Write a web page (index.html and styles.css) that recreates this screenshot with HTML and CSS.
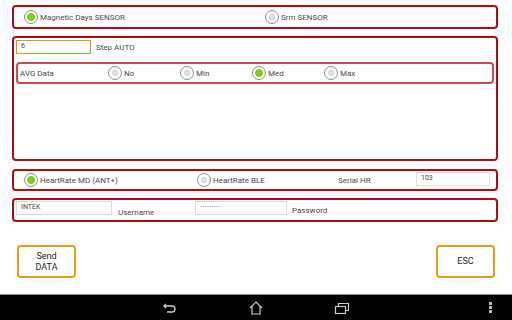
FILE: index.html
```html
<!DOCTYPE html>
<html>
<head>
    <title>Settings</title>
    <link rel="stylesheet" href="styles.css">
</head>
<body>
    <div class="screen">
        <div class="content">
            <div class="panel row sensors">
                <label class="radio-item w-sensor"><span class="radio checked"></span>Magnetic Days SENSOR</label>
                <label class="radio-item"><span class="radio"></span>Srm SENSOR</label>
            </div>

            <div class="panel big">
                <div class="step-row">
                    <div class="field orange">6</div>
                    <span class="lbl">Step AUTO</span>
                </div>
                <div class="avg-box">
                    <span class="lbl avg-title">AVG Data</span>
                    <label class="radio-item w-avg"><span class="radio"></span>No</label>
                    <label class="radio-item w-avg"><span class="radio"></span>Min</label>
                    <label class="radio-item w-avg"><span class="radio checked"></span>Med</label>
                    <label class="radio-item"><span class="radio"></span>Max</label>
                </div>
            </div>

            <div class="panel row hr">
                <label class="radio-item w-hr"><span class="radio checked"></span>HeartRate MD (ANT+)</label>
                <label class="radio-item w-ble"><span class="radio"></span>HeartRate BLE</label>
                <span class="lbl w-serial">Serial HR</span>
                <div class="field grey serial">103</div>
            </div>

            <div class="panel row login">
                <div class="field grey user">INTEK</div>
                <span class="lbl w-user">Username</span>
                <div class="field grey pass">&middot;&middot;&middot;&middot;&middot;&middot;&middot;&middot;&middot;</div>
                <span class="lbl">Password</span>
            </div>

            <div class="buttons">
                <button class="btn">Send<br>DATA</button>
                <button class="btn">ESC</button>
            </div>
        </div>

        <div class="navbar">
            <svg class="nav-icon back" width="16" height="12" viewBox="0 0 16 12">
                <path d="M4 2 L2 4 L4 6 M2 4 H10 Q13 4 13 7 Q13 10 10 10 H5" fill="none" stroke="#ccc" stroke-width="1.3"/>
            </svg>
            <svg class="nav-icon" width="16" height="16" viewBox="0 0 16 16">
                <path d="M2 8 L8 2 L14 8 M4 6.5 V14 H12 V6.5" fill="none" stroke="#ccc" stroke-width="1.2"/>
            </svg>
            <svg class="nav-icon" width="16" height="14" viewBox="0 0 16 14">
                <rect x="1.5" y="5.5" width="10" height="7" fill="none" stroke="#ccc" stroke-width="1.2"/>
                <path d="M4.5 5.5 V2.5 H14.5 V9.5 H11.5" fill="none" stroke="#ccc" stroke-width="1.2"/>
            </svg>
            <div class="menu-dots"><i></i><i></i><i></i></div>
        </div>
    </div>
</body>
</html>
```

FILE: styles.css
```css
* {
    margin: 0;
    padding: 0;
    box-sizing: border-box;
    font-family: Roboto, "Liberation Sans", sans-serif;
}

body {
    background: #ffffff;
    color: #4a4a4a;
    font-size: 8px;
}

.screen {
    width: 512px;
    height: 320px;
    display: flex;
    flex-direction: column;
}

.content {
    flex: 1;
    padding: 5px 14px 0 12px;
    display: flex;
    flex-direction: column;
}

/* Panels */
.panel {
    border: 2px solid #b00d12;
    border-radius: 4px;
    margin-bottom: 7px;
}

.row {
    display: flex;
    align-items: center;
}

.sensors {
    height: 24px;
    padding-left: 10px;
}

.big {
    height: 125px;
    padding: 1px 2px;
    margin-bottom: 8px;
}

.hr {
    height: 22px;
    padding-left: 10px;
}

.login {
    height: 24px;
    padding-left: 2px;
}

/* Radio buttons */
.radio-item {
    display: flex;
    align-items: center;
    gap: 2px;
    white-space: nowrap;
}

.radio {
    width: 14px;
    height: 14px;
    border: 1px solid #909090;
    border-radius: 50%;
    display: flex;
    align-items: center;
    justify-content: center;
    background: #fafafa;
}

.radio::after {
    content: "";
    width: 4px;
    height: 4px;
    border-radius: 50%;
    background: #e4e4e4;
    border: 1px solid #d0d0d0;
}

.radio.checked::after {
    width: 6px;
    height: 6px;
    background: #7fd11b;
    border-color: #74c615;
}

.w-sensor { width: 241px; }
.w-avg { width: 72px; }
.w-hr { width: 173px; }
.w-ble { width: 141px; }
.w-serial { width: 78px; }
.w-user { width: 77px; margin-top: 4px; }

/* Fields */
.field {
    height: 14px;
    padding: 1px 4px;
    font-size: 7px;
    color: #444;
    background: #fff;
}

.orange {
    width: 75px;
    border: 1px solid #f08a24;
}

.grey {
    border: 1px solid #dcdcdc;
}

.serial {
    width: 74px;
    margin-top: -3px;
}

.user {
    width: 96px;
    margin-right: 6px;
    margin-top: -5px;
}

.pass {
    width: 92px;
    margin-right: 5px;
    margin-top: -5px;
    font-size: 8px;
    line-height: 8px;
    letter-spacing: 0.2px;
}

.lbl {
    white-space: nowrap;
}

/* Step + AVG */
.step-row {
    display: flex;
    align-items: center;
    gap: 5px;
    margin-top: 1px;
}

.avg-box {
    margin-top: 8px;
    height: 22px;
    border: 2px solid #cc4a4e;
    border-radius: 4px;
    display: flex;
    align-items: center;
    padding-left: 2px;
}

.avg-title {
    width: 88px;
}

/* Buttons */
.buttons {
    display: flex;
    justify-content: space-between;
    padding: 0 3px 0 5px;
    margin-top: 16px;
}

.btn {
    width: 59px;
    height: 33px;
    border: 2px solid #e0a01c;
    border-radius: 4px;
    background: #fff;
    color: #222;
    font-size: 9px;
    line-height: 11px;
}

/* Navigation bar */
.navbar {
    height: 26px;
    background: #000;
    border-top: 1px solid #8a8a8a;
    display: flex;
    align-items: center;
    padding-left: 162px;
    gap: 70px;
    position: relative;
}

.menu-dots {
    position: absolute;
    right: 20px;
    top: 7px;
    display: flex;
    flex-direction: column;
    gap: 1px;
}

.menu-dots i {
    width: 3px;
    height: 3px;
    background: #bbb;
}
```
